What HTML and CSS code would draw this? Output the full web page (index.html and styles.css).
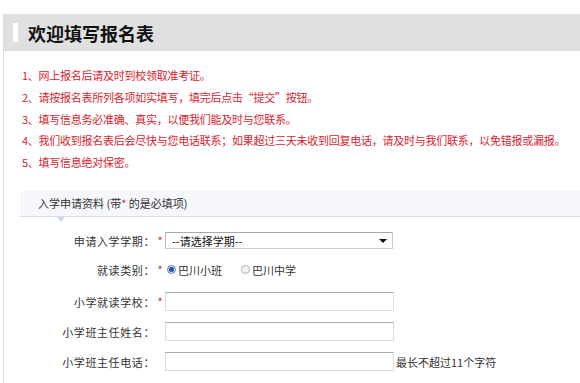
FILE: index.html
```html
<!DOCTYPE html>
<html lang="zh">
<head>
    <meta charset="UTF-8">
    <title>欢迎填写报名表</title>
    <link rel="stylesheet" href="styles.css">
</head>
<body>
    <div class="page">
        <div class="head">
            <span class="head-bar"></span>
            <h1>欢迎填写报名表</h1>
        </div>
        <div class="notes">
            <p>1、网上报名后请及时到校领取准考证。</p>
            <p>2、请按报名表所列各项如实填写，填完后点击“提交”按钮。</p>
            <p>3、填写信息务必准确、真实，以便我们能及时与您联系。</p>
            <p>4、我们收到报名表后会尽快与您电话联系；如果超过三天未收到回复电话，请及时与我们联系，以免错报或漏报。</p>
            <p>5、填写信息绝对保密。</p>
        </div>
        <div class="form-box">
            <div class="form-title">入学申请资料 (带<span class="req">*</span> 的是必填项)</div>
            <div class="row">
                <label class="row-label">申请入学学期：</label>
                <span class="req">*</span>
                <div class="select-wrap">
                    <select class="select">
                        <option>--请选择学期--</option>
                    </select>
                </div>
            </div>
            <div class="row row-radio">
                <label class="row-label">就读类别：</label>
                <span class="req">*</span>
                <div class="radios">
                    <label class="radio-item"><input type="radio" name="type" checked>巴川小班</label>
                    <label class="radio-item"><input type="radio" name="type">巴川中学</label>
                </div>
            </div>
            <div class="row">
                <label class="row-label">小学就读学校：</label>
                <span class="req">*</span>
                <input class="text-input" type="text">
            </div>
            <div class="row">
                <label class="row-label">小学班主任姓名：</label>
                <span class="req"></span>
                <input class="text-input" type="text">
            </div>
            <div class="row">
                <label class="row-label">小学班主任电话：</label>
                <span class="req"></span>
                <input class="text-input" type="text">
                <span class="hint">最长不超过11个字符</span>
            </div>
        </div>
    </div>
</body>
</html>
```

FILE: styles.css
```css
body {
    margin: 0;
    font-family: "Noto Sans CJK SC", "Liberation Sans", sans-serif;
    font-size: 11px;
    color: #333;
}
.page {
    margin: 14px 0 0 3px;
    min-height: 369px;
    border-left: 1px solid #ddd;
}
.head {
    height: 37px;
    background-color: #e0e0e0;
    display: flex;
    align-items: center;
    padding-left: 9px;
}
.head-bar {
    width: 5px;
    height: 19px;
    background-color: #fff;
    margin-right: 10px;
}
h1 {
    margin: 0;
    font-size: 18px;
    line-height: 20px;
    font-weight: bold;
    color: #111;
}
.notes {
    margin-top: 14px;
    padding-left: 18px;
    color: #d9232e;
    letter-spacing: -0.25px;
}
.notes p {
    margin: 0;
    line-height: 21.75px;
    white-space: nowrap;
}
.form-box {
    margin: 17px 0 0 16px;
}
.form-title {
    position: relative;
    height: 25px;
    line-height: 25px;
    padding-left: 18px;
    background-color: #f5f7fa;
    border-bottom: 1px solid #d6dde5;
    margin-bottom: 9px;
}
.form-title::after {
    content: "";
    position: absolute;
    left: 37px;
    top: 26px;
    border-left: 4px solid transparent;
    border-right: 4px solid transparent;
    border-top: 5px solid #cfd8e2;
}
.req {
    color: #d9232e;
}
.row {
    display: flex;
    align-items: center;
    height: 30px;
}
.row-radio {
    height: 28px;
    margin-bottom: 3px;
}
.row-label {
    width: 135px;
    text-align: right;
    letter-spacing: 0.6px;
}
.row .req {
    width: 10px;
    text-align: center;
    line-height: 11px;
    height: 11px;
}
.select-wrap {
    position: relative;
    width: 228px;
    height: 17px;
}
.select {
    appearance: none;
    -webkit-appearance: none;
    width: 100%;
    height: 17px;
    margin: 0;
    padding: 0 0 0 6px;
    border: 1px solid #ccc;
    border-top-color: #a8a8a8;
    border-left-color: #bbb;
    border-radius: 0;
    background-color: #fff;
    font-family: inherit;
    font-size: 11px;
    color: #111;
}
.select-wrap::after {
    content: "";
    position: absolute;
    right: 6px;
    top: 7px;
    border-left: 4px solid transparent;
    border-right: 4px solid transparent;
    border-top: 4px solid #111;
    pointer-events: none;
}
.radios {
    display: flex;
    align-items: center;
}
.radio-item {
    display: flex;
    align-items: center;
    margin-right: 17px;
}
.radio-item input {
    appearance: none;
    -webkit-appearance: none;
    width: 9px;
    height: 9px;
    margin: 0 2px 0 2px;
    border: 1px solid #b5b5b5;
    border-radius: 50%;
    background-color: #f2f2f2;
}
.radio-item input:checked {
    border-color: #5a7fa8;
    background: radial-gradient(circle, #1e4f8a 0, #2f6bb0 2.5px, #e8eef6 3px);
}
.text-input {
    width: 229px;
    height: 19px;
    box-sizing: border-box;
    margin: 0;
    padding: 0 4px;
    border: 1px solid #ddd;
    border-top-color: #aaa;
    font-family: inherit;
    font-size: 11px;
}
.hint {
    margin-left: 2px;
    color: #333;
}
```
